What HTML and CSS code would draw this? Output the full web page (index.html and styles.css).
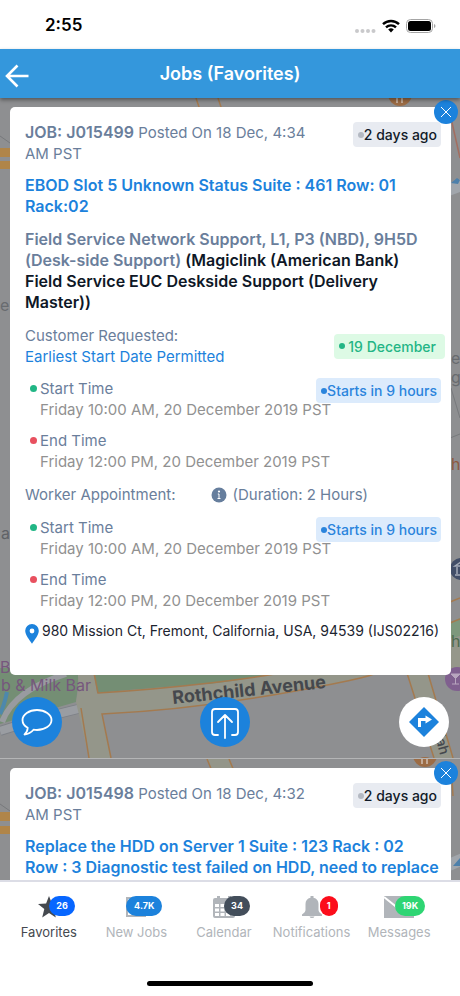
FILE: index.html
```html
<!DOCTYPE html>
<html lang="en">
<head>
    <meta charset="UTF-8">
    <meta name="viewport" content="width=device-width, initial-scale=1.0">
    <title>Jobs (Favorites)</title>
    <link rel="stylesheet" href="styles.css">
</head>
<body>
    <div class="status-bar">
        <span class="time">2:55</span>
        <div class="status-icons">
            <svg width="22" height="6" viewBox="0 0 22 6" fill="#c9c9cb">
                <circle cx="3" cy="4" r="2"/><circle cx="8.5" cy="4" r="2"/><circle cx="14" cy="4" r="2"/><circle cx="19.5" cy="4" r="2"/>
            </svg>
            <svg width="18" height="14" viewBox="0 0 18 14" fill="none" stroke="#000" stroke-width="2.4">
                <path d="M1 5.2a11.5 11.5 0 0 1 16 0"/>
                <path d="M4 8.4a7.2 7.2 0 0 1 10 0"/>
                <path d="M9 13.4 6.2 10.6a4 4 0 0 1 5.6 0z" fill="#000" stroke="none"/>
            </svg>
            <svg width="30" height="14" viewBox="0 0 30 14">
                <rect x="0.5" y="0.5" width="26" height="13" rx="4" fill="none" stroke="#a5a5a5"/>
                <rect x="2" y="2" width="23" height="10" rx="2.5"/>
                <path d="M28 5v4q1.5-.5 1.5-2t-1.5-2z" fill="#a5a5a5"/>
            </svg>
        </div>
    </div>

    <header class="top-bar">
        <button class="back" aria-label="Back">
            <svg width="24" height="24" viewBox="0 0 24 24" fill="none" stroke="#fff" stroke-width="2.6">
                <path d="M23.5 12H2.5M12.5 1.5 2 12l10.5 10.5"/>
            </svg>
        </button>
        <h1>Jobs (Favorites)</h1>
    </header>

    <main class="job-list">
        <section class="job">
            <svg class="map" viewBox="0 0 460 660" preserveAspectRatio="xMidYMin slice" aria-hidden="true">
                <rect width="460" height="660" fill="#8e8f91"/>
                <!-- parks -->
                <path d="M0 570H80L76 604 0 626z" fill="#748e74"/>
                <path d="M93 570H345Q250 584 210 586T97 595z" fill="#748e74"/>
                <path d="M450 524l10-4v18l-10 3z" fill="#7d987c"/>
                <path d="M450 541l10-3v46l-10 2z" fill="#95978a"/>
                <!-- side street and creek -->
                <path d="M0 636Q40 622 82 610V660H0z" fill="#8e8f91"/>
                <path d="M0 633Q40 620 82 610" fill="none" stroke="#7d8087" stroke-width="10"/>
                <path d="M0 633Q40 620 82 610" fill="none" stroke="#9a9da2" stroke-width="8"/>
                <path d="M2 624Q14 592 66 576" fill="none" stroke="#999ba0" stroke-width="6"/>
                <path d="M0 616Q4 608 7 594" fill="none" stroke="#4d88ac" stroke-width="4"/>
                <!-- main roads -->
                <path d="M77 570Q80 588 76 604L89 660H111L102 616Q190 612 290 594T385 572V560H340Q250 582 210 586T97 595L93 570z" fill="#94968a"/>
                <path d="M406 572 434 660H453L427 572z" fill="#94968a"/>
                <g fill="none" stroke="#a47a4f" stroke-width="1.5">
                    <path d="M93 570 98 595Q150 592 210 585T300 571"/>
                    <path d="M81 610 89 660M111 660 102 616Q190 612 290 594T372 574"/>
                    <path d="M406 572 434 660M427 572 453 660"/>
                    <path d="M196 0 200 12M218 0 222 12"/>
                    <path d="M450 504l10-4M450 525l10-4M450 587l10-2"/>
                </g>
                <path d="M451 20l9 40" stroke="#a36e60" stroke-width="1.5"/>
                <path d="M448 92l14-5" stroke="#a1a6ac" stroke-width="12"/>
                <path d="M451 85l6-5 3 2-2 4z" fill="#4d80ab"/>
                <path d="M451 290l9 30M450 340l10-4" stroke="#77797c"/>
                <path d="M0 50h12v9H0zM0 63h12v8H0z" fill="#b08549"/>
                <path d="M0 38l10 7" stroke="#77797c"/>
                <circle cx="400" cy="-4" r="12" fill="#9c6c45"/>
                <path d="M397 0v5M402 0v5" stroke="#c3aa97" stroke-width="2"/>
                <circle cx="461" cy="471" r="11" fill="#424e68"/>
                <path d="M455 468l6-4v4zM457 469v7M455 477h6" stroke="#a4abb8" stroke-width="1.5" fill="none"/>
                <circle cx="457" cy="581" r="12" fill="#80608f"/>
                <path d="M451 576h9l-4.5 4.5zM455.5 580v6M452 586h7" fill="#b8a5be" stroke="#b8a5be"/>
                <g class="map-label">
                    <text x="0" y="575" fill="#76577d">B</text>
                    <text x="1" y="593" fill="#76577d">b &amp; Milk Bar</text>
                    <text x="0" y="213" fill="#686b6f">e</text>
                    <text x="1" y="441" fill="#5f6266">a</text>
                    <text x="451" y="266" fill="#686b6f">e</text>
                    <text x="451" y="285" fill="#686b6f">g</text>
                    <text x="451" y="372" fill="#8e593e">h</text>
                    <text x="451" y="549" fill="#4c6b4e">h</text>
                </g>
                <g class="road-label">
                    <text x="173" y="606" transform="rotate(-6 173 606)">Rothchild Avenue</text>
                    <text class="side-road" x="435" y="638" transform="rotate(75 435 638)">Iah</text>
                </g>
                <circle cx="425" cy="671" r="12" fill="#9c6c45"/>
            </svg>

            <article class="card">
                <button class="close" aria-label="Remove job J015499">
                    <svg width="12" height="12" viewBox="0 0 12 12" stroke="#fff"><path d="M1 1l10 10M11 1 1 11"/></svg>
                </button>
                <div class="card-head">
                    <p><strong>JOB: J015499</strong> Posted On 18 Dec, 4:34 AM PST</p>
                    <span class="pill pill-gray">2 days ago</span>
                </div>
                <h2>EBOD Slot 5 Unknown Status Suite : 461 Row: 01 Rack:02</h2>
                <p class="service">Field Service Network Support, L1, P3 (NBD), 9H5D (Desk-side Support) <span>(Magiclink (American Bank) Field Service EUC Deskside Support (Delivery Master))</span></p>
                <div class="requested">
                    <p>Customer Requested:<br><a href="#">Earliest Start Date Permitted</a></p>
                    <span class="pill pill-green">19 December</span>
                </div>
                <div class="times">
                    <span class="pill pill-blue">Starts in 9 hours</span>
                    <dl>
                        <dt class="start">Start Time</dt>
                        <dd>Friday 10:00 AM, 20 December 2019 PST</dd>
                        <dt class="end">End Time</dt>
                        <dd>Friday 12:00 PM, 20 December 2019 PST</dd>
                    </dl>
                </div>
                <div class="worker">
                    <span>Worker Appointment:</span>
                    <span class="duration">
                        <svg width="16" height="16" viewBox="0 0 16 16">
                            <circle cx="8" cy="8" r="7.5" fill="#667e9d"/>
                            <circle cx="8" cy="4.5" r="1.1" fill="#fff"/>
                            <path d="M6.8 7H8v4.5M6.5 11.5h3" stroke="#fff" fill="none"/>
                        </svg>
                        (Duration: 2 Hours)
                    </span>
                </div>
                <div class="times">
                    <span class="pill pill-blue">Starts in 9 hours</span>
                    <dl>
                        <dt class="start">Start Time</dt>
                        <dd>Friday 10:00 AM, 20 December 2019 PST</dd>
                        <dt class="end">End Time</dt>
                        <dd>Friday 12:00 PM, 20 December 2019 PST</dd>
                    </dl>
                </div>
                <address>
                    <svg width="14" height="20" viewBox="0 0 14 20">
                        <path d="M7 0a6.8 6.8 0 0 1 6.8 6.8C13.8 11 9.5 16 7 19.8 4.5 16 .2 11 .2 6.8A6.8 6.8 0 0 1 7 0z" fill="#1c82dc"/>
                        <circle cx="7" cy="7" r="2.4" fill="#fff"/>
                    </svg>
                    980 Mission Ct, Fremont, California, USA, 94539 (IJS02216)
                </address>
            </article>

            <div class="actions">
                <button aria-label="Chat">
                    <svg width="32" height="28" viewBox="0 0 32 28" fill="none" stroke="#fff" stroke-width="1.8" stroke-linejoin="round">
                        <path d="M16 2C24 2 30.5 6.5 30.5 12S24 22 16 22q-2 0-3.5-.3Q9 26 3.5 26.5 6.5 24 6.7 19.8 1.5 17 1.5 12C1.5 6.5 8 2 16 2z"/>
                    </svg>
                </button>
                <button aria-label="Share">
                    <svg width="30" height="34" viewBox="0 0 30 34" fill="none" stroke="#fff" stroke-width="1.8" stroke-linecap="round" stroke-linejoin="round">
                        <path d="M8 30H5q-3 0-3-3V7q0-3 3-3h20q3 0 3 3v20q0 3-3 3h-3M15 33V10M8 17l7-7 7 7"/>
                    </svg>
                </button>
                <button class="directions" aria-label="Directions">
                    <svg width="30" height="30" viewBox="0 0 30 30">
                        <path d="M15 0 30 15 15 30 0 15z" fill="#1c82dc"/>
                        <path d="M10.5 20v-7.5H17" fill="none" stroke="#fff" stroke-width="3"/>
                        <path d="M16.5 8.5v8l6.5-4z" fill="#fff"/>
                    </svg>
                </button>
            </div>
        </section>

        <section class="job">
            <svg class="map" viewBox="0 0 460 200" preserveAspectRatio="xMidYMin slice" aria-hidden="true">
                <rect width="460" height="200" fill="#8e8f91"/>
                <path d="M207 0l5 12h22l-5-12z" fill="#94968a"/>
                <path d="M207 0l5 12M229 0l5 12M451 3l2 34" stroke="#a47a4f" stroke-width="1.5"/>
                <path d="M0 53h12v9H0zM0 67h12v8H0z" fill="#b08549"/>
                <path d="M0 45l10 7" stroke="#77797c"/>
                <circle cx="425" cy="-4" r="12" fill="#9c6c45"/>
                <path d="M422 0v5M427 0v5" stroke="#c3aa97" stroke-width="2"/>
                <path d="M449 106l14-6" stroke="#a1a6ac" stroke-width="12"/>
                <path d="M453 107l7-8v8z" fill="#4d80ab"/>
            </svg>
            <article class="card">
                <button class="close" aria-label="Remove job J015498">
                    <svg width="12" height="12" viewBox="0 0 12 12" stroke="#fff"><path d="M1 1l10 10M11 1 1 11"/></svg>
                </button>
                <div class="card-head">
                    <p><strong>JOB: J015498</strong> Posted On 18 Dec, 4:32 AM PST</p>
                    <span class="pill pill-gray">2 days ago</span>
                </div>
                <h2>Replace the HDD on Server 1 Suite : 123 Rack : 02 Row&nbsp;:&nbsp;3 Diagnostic test failed on HDD, need to replace</h2>
            </article>
        </section>
    </main>

    <nav class="tab-bar">
        <a href="#" class="tab active">
            <svg width="22" height="22" viewBox="0 0 22 22" fill="currentColor"><path d="M11 0l2.9 7.5 8 .5-6.2 5 2.1 8.5-6.8-4.5-6.8 4.5L6.3 13 0 8l8.1-.5z"/></svg>
            <span class="badge badge-blue">26</span>
            Favorites
        </a>
        <a href="#" class="tab">
            <svg width="22" height="22" viewBox="0 0 22 22" fill="none" stroke="currentColor" stroke-width="2"><path d="M2 2h18v18H2z"/></svg>
            <span class="badge badge-sky">4.7K</span>
            New Jobs
        </a>
        <a href="#" class="tab">
            <svg width="22" height="22" viewBox="0 0 22 22">
                <path d="M0 4q0-2 2-2h2V0h3v2h8V0h3v2h2q2 0 2 2v16q0 2-2 2H2q-2 0-2-2z" fill="currentColor"/>
                <path d="M2 8h4v3H2zM7.5 8h4v3h-4zM13 8h4v3h-4zM2 12.5h4v3H2zM7.5 12.5h4v3h-4zM13 12.5h4v3h-4zM2 17h4v3H2zM7.5 17h4v3h-4zM13 17h4v3h-4z" fill="#fff"/>
            </svg>
            <span class="badge badge-dark">34</span>
            Calendar
        </a>
        <a href="#" class="tab">
            <svg width="22" height="22" viewBox="0 0 22 22" fill="currentColor"><path d="M9.5 0h3v1.8Q17.5 3 17.5 8v6q0 2 3.5 4.5V20H1v-1.5Q4.5 16 4.5 14V8q0-5 5-6.2zM8.5 20.5h5Q13 22 11 22t-2.5-1.5z"/></svg>
            <span class="badge badge-red">1</span>
            Notifications
        </a>
        <a href="#" class="tab">
            <svg width="30" height="22" viewBox="0 0 30 22"><path d="M0 0h30v22H0z" fill="currentColor"/><path d="M0 1l15 12L30 1" stroke="#fff" stroke-width="2" fill="none"/></svg>
            <span class="badge badge-green">19K</span>
            Messages
        </a>
    </nav>
    <div class="home-indicator"></div>
</body>
</html>
```
FILE: styles.css
```css
* {
    box-sizing: border-box;
}

body {
    display: flex;
    flex-direction: column;
    height: 100vh;
    margin: 0;
    font-family: Inter, "Liberation Sans", sans-serif;
    font-size: 15px;
    line-height: 21px;
    color: #6a7e9b;
    background: #fff;
}

h1, h2, p, dl, dd {
    margin: 0;
}

svg {
    flex: none;
}

button {
    display: flex;
    align-items: center;
    justify-content: center;
    padding: 0;
    border: none;
    cursor: pointer;
}

a {
    color: #1c82dc;
    text-decoration: none;
}

.status-bar {
    display: flex;
    flex: none;
    align-items: center;
    justify-content: space-between;
    height: 49px;
    padding: 2px 24px 0 45px;
}

.time {
    font-size: 17px;
    font-weight: 600;
    color: #000;
}

.status-icons {
    display: flex;
    align-items: flex-end;
    gap: 6px;
}

.top-bar {
    display: grid;
    grid-template-columns: 30px 1fr 30px;
    flex: none;
    align-items: center;
    height: 49px;
    padding-left: 5px;
    padding-right: 5px;
    background: #3497dc;
    box-shadow: 0 2px 4px rgba(0, 0, 0, 0.4);
    z-index: 1;
}

.top-bar h1 {
    font-size: 18px;
    font-weight: 600;
    color: #fff;
    text-align: center;
}

.back {
    justify-content: flex-start;
    padding-top: 4px;
    background: none;
}

/* job list */
.job-list {
    flex: 1;
    min-height: 0;
    overflow: hidden;
}

.job {
    position: relative;
    padding: 9px 9px 11px 10px;
    border-bottom: 1px solid #b4b5b6;
}

.map {
    position: absolute;
    top: 0;
    left: 0;
    width: 100%;
    height: 100%;
}

.map-label {
    font-size: 16px;
}

.road-label {
    font-size: 18px;
    font-weight: 700;
    fill: #45484d;
}

.side-road {
    font-size: 14px;
    font-weight: 500;
}

.card {
    position: relative;
    display: flex;
    flex-direction: column;
    gap: 11px;
    padding: 15px 10px 31px 15px;
    background: #fff;
    border-radius: 5px;
}

.close {
    position: absolute;
    top: -7px;
    right: -7px;
    width: 24px;
    height: 24px;
    border-radius: 50%;
    background: #1c82dc;
}

.card-head,
.requested {
    display: flex;
    align-items: flex-start;
    justify-content: space-between;
    gap: 24px;
}

.requested {
    align-items: center;
    margin-top: 1px;
    margin-right: -4px;
}

.card h2 {
    margin-right: -6px;
    font-size: 16px;
    font-weight: 600;
    color: #1c82dc;
}

.card strong {
    font-size: 16px;
    font-weight: 600;
}

.service {
    margin-top: 1px;
    padding-right: 10px;
    font-size: 16px;
    font-weight: 600;
}

.service span {
    color: #0e1726;
}

.pill {
    display: flex;
    flex: none;
    align-items: center;
    height: 25px;
    padding: 0 4px 0 5px;
    border-radius: 4px;
    font-size: 14px;
    font-weight: 500;
}

.pill::before {
    content: "";
    width: 6px;
    height: 6px;
    border-radius: 50%;
    background: currentColor;
}

.pill-gray {
    color: #111a28;
    background: #e8ebf1;
}

.pill-gray::before {
    background: #b4b9c2;
}

.pill-green {
    gap: 3px;
    padding-right: 9px;
    color: #24b585;
    background: #ddfae5;
}

.pill-blue {
    color: #2b84dc;
    background: #dcebfc;
}

.times {
    position: relative;
}

.times .pill {
    position: absolute;
    top: 0;
    right: 0;
}

.times dl {
    padding-left: 15px;
}

.times dt {
    display: flex;
    align-items: center;
}

.times dt::before {
    content: "";
    width: 7px;
    height: 7px;
    margin-left: -10px;
    margin-right: 3px;
    border-radius: 50%;
}

.times .start::before {
    background: #21b685;
}

.times .end::before {
    background: #e8505f;
}

.times dd {
    color: #919191;
}

.times dd + dt {
    margin-top: 10px;
}

.worker {
    display: flex;
    gap: 35px;
    padding: 1px 0;
}

.duration {
    display: flex;
    align-items: center;
    gap: 6px;
}

address {
    display: flex;
    align-items: flex-start;
    gap: 3px;
    font-size: 14px;
    line-height: 17px;
    font-style: normal;
    color: #1c2430;
}

address svg {
    margin-top: 2px;
}

.actions {
    position: relative;
    display: grid;
    grid-template-columns: 43% 1fr auto;
    margin-top: 22px;
    padding: 0 2px;
}

.actions button {
    width: 50px;
    height: 50px;
    border-radius: 50%;
    background: #1c82dc;
}

.actions .directions {
    background: #fff;
}

/* bottom tabs */
.tab-bar {
    display: grid;
    grid-template-columns: repeat(5, 1fr);
    flex: none;
    height: 101px;
    padding: 14px 17px 0 5px;
    border-top: 2px solid #dcdde6;
    background: #fff;
    z-index: 1;
}

.tab {
    position: relative;
    display: flex;
    flex-direction: column;
    align-items: center;
    gap: 4px;
    font-size: 13px;
    color: #b1b5ba;
}

.tab.active {
    color: #45494f;
}

.badge {
    position: absolute;
    top: 0;
    right: calc(50% - 26px);
    padding: 0 7px;
    border-radius: 10px;
    font-size: 9px;
    font-weight: 700;
    line-height: 20px;
    color: #fff;
}

.badge-blue {
    background: #0766ff;
}

.badge-sky {
    padding: 0 8px;
    background: #1c82dc;
}

.badge-dark {
    background: #434e5b;
}

.badge-red {
    background: #fc0d1b;
}

.badge-green {
    background: #2ed573;
}

.home-indicator {
    flex: none;
    align-self: center;
    width: 36%;
    height: 5px;
    margin-bottom: 10px;
    border-radius: 3px;
    background: #000;
}
```
